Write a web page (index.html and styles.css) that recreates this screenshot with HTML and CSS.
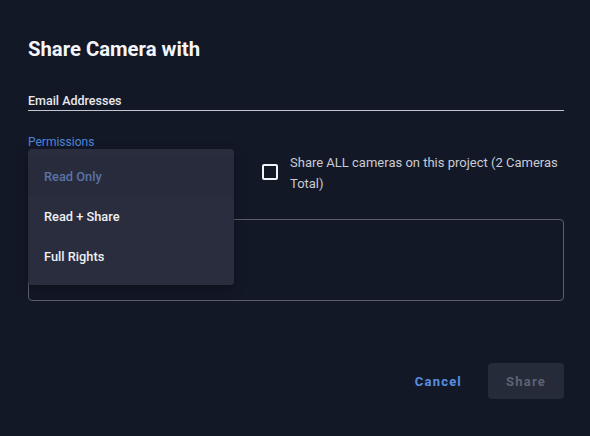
FILE: index.html
```html
<!DOCTYPE html>
<html>
<head>
<meta charset="utf-8">
<link rel="stylesheet" href="styles.css">
</head>
<body>
<div class="dialog">
  <h1 class="title">Share Camera with</h1>
  <div class="email-field">
    <span class="email-label">Email Addresses</span>
  </div>
  <div class="perm-row">
    <div class="perm-col">
      <div class="perm-label">Permissions</div>
      <ul class="menu">
        <li class="menu-item selected">Read Only</li>
        <li class="menu-item">Read + Share</li>
        <li class="menu-item">Full Rights</li>
      </ul>
    </div>
    <label class="share-all">
      <span class="checkbox"></span>
      <span class="share-text">Share ALL cameras on this project (2 Cameras Total)</span>
    </label>
  </div>
  <div class="message-box"></div>
  <div class="actions">
    <button class="btn-cancel">Cancel</button>
    <button class="btn-share">Share</button>
  </div>
</div>
</body>
</html>
```

FILE: styles.css
```css
html, body {
  margin: 0;
  padding: 0;
  background: #131827;
  width: 590px;
  height: 436px;
  overflow: hidden;
  font-family: Roboto, "Liberation Sans", sans-serif;
}
.dialog {
  padding: 37px 26px 0 28px;
  display: flex;
  flex-direction: column;
}
.title {
  margin: 0;
  font-size: 20.3px;
  font-weight: 700;
  color: #f4f5f8;
  line-height: 24px;
}
.email-field {
  margin-top: 29px;
  border-bottom: 1px solid #c3c6ce;
  padding-bottom: 1px;
}
.email-label {
  font-size: 12.5px;
  font-weight: 500;
  color: #e8e9ee;
  line-height: 16px;
}
.perm-row {
  margin-top: 23px;
  display: flex;
  align-items: flex-start;
  gap: 28px;
}
.perm-col {
  position: relative;
  width: 206px;
}
.perm-label {
  font-size: 12px;
  color: #4f86d6;
  line-height: 16px;
}
.menu {
  position: absolute;
  top: 15px;
  left: 0;
  width: 206px;
  margin: 0;
  padding: 8px 0;
  list-style: none;
  background: #292d3e;
  border-radius: 4px;
  box-shadow: 0 4px 12px rgba(0,0,0,0.3);
  z-index: 2;
}
.menu-item {
  height: 40px;
  line-height: 40px;
  padding: 0 16px;
  font-size: 12.8px;
  font-weight: 500;
  color: #eef0f4;
}
.menu-item.selected {
  color: #5b73a6;
  background: #272b3c;
}
.share-all {
  display: flex;
  align-items: flex-start;
  gap: 12px;
  margin-top: 18px;
  width: 300px;
}
.checkbox {
  flex: none;
  width: 12px;
  height: 12px;
  border: 2px solid #f2f3f6;
  border-radius: 2px;
  margin-top: 12px;
}
.share-text {
  font-size: 13px;
  line-height: 21px;
  color: #c9cbd2;
}
.message-box {
  margin-top: 25px;
  height: 80px;
  border: 1px solid #5b5f6d;
  border-radius: 4px;
}
.actions {
  margin-top: 62px;
  display: flex;
  justify-content: flex-end;
  align-items: center;
  gap: 18px;
}
button {
  font-family: Roboto, "Liberation Sans", sans-serif;
  font-size: 13px;
  font-weight: 700;
  letter-spacing: 1.2px;
  border: none;
  border-radius: 4px;
  height: 36px;
}
.btn-cancel {
  background: transparent;
  color: #5a8fe0;
  padding: 0 8px;
}
.btn-share {
  background: #262b3a;
  color: #5d6272;
  width: 76px;
}
```
